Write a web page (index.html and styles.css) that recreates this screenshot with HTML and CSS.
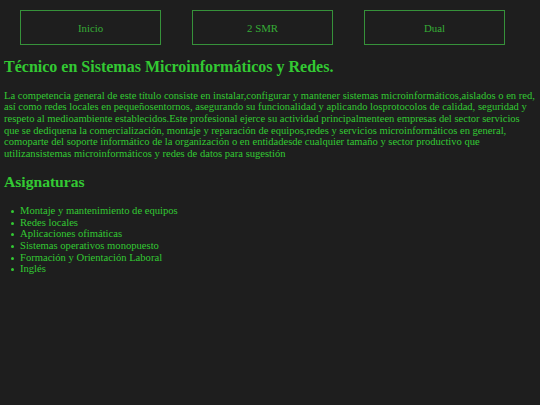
FILE: index.html
```html
<!DOCTYPE html>
<html lang="es">
<head>
<meta charset="utf-8">
<link rel="stylesheet" href="styles.css">
</head>
<body>
<nav class="nav">
  <a class="nav-btn" href="#">Inicio</a>
  <a class="nav-btn" href="#">2 SMR</a>
  <a class="nav-btn" href="#">Dual</a>
</nav>
<main class="content">
  <h1 class="title">Técnico en Sistemas Microinformáticos y Redes.</h1>
  <p class="text">La competencia general de este título consiste en instalar,configurar y mantener sistemas microinformáticos,aislados o en red, así como redes locales en pequeñosentornos, asegurando su funcionalidad y aplicando losprotocolos de calidad, seguridad y respeto al medioambiente establecidos.Este profesional ejerce su actividad principalmenteen empresas del sector servicios que se dediquena la comercialización, montaje y reparación de equipos,redes y servicios microinformáticos en general, comoparte del soporte informático de la organización o en entidadesde cualquier tamaño y sector productivo que utilizansistemas microinformáticos y redes de datos para sugestión</p>
  <h2 class="subtitle">Asignaturas</h2>
  <ul class="list">
    <li>Montaje y mantenimiento de equipos</li>
    <li>Redes locales</li>
    <li>Aplicaciones ofimáticas</li>
    <li>Sistemas operativos monopuesto</li>
    <li>Formación y Orientación Laboral</li>
    <li>Inglés</li>
  </ul>
</main>
</body>
</html>
```
FILE: styles.css
```css
html, body {
  margin: 0;
  padding: 0;
  background: #1e1e1e;
}
body {
  font-family: "Liberation Serif", "Times New Roman", serif;
  color: #33c933;
}
.nav {
  display: flex;
  gap: 31px;
  padding: 10px 0 0 20px;
}
.nav-btn {
  box-sizing: border-box;
  width: 141px;
  height: 35px;
  border: 1px solid #36923a;
  display: flex;
  align-items: center;
  justify-content: center;
  color: #36ad36;
  text-decoration: none;
  font-size: 10.8px;
}
.content {
  padding: 0 5px 0 4px;
}
.title {
  margin: 12px 0 0;
  font-size: 16px;
  line-height: 20px;
  font-weight: bold;
}
.text {
  margin: 12.6px 0 0;
  font-size: 10.55px;
  line-height: 11.7px;
}
.subtitle {
  margin: 12.6px 0 0;
  font-size: 15.6px;
  line-height: 20px;
  font-weight: bold;
}
.list {
  margin: 12.5px 0 0;
  padding-left: 16px;
  list-style: none;
  font-size: 10.6px;
  line-height: 11.7px;
}
.list li::before {
  content: "";
  display: inline-block;
  width: 3px;
  height: 3px;
  border-radius: 50%;
  background: currentColor;
  margin: 0 5.8px 1px -8.8px;
}
```
